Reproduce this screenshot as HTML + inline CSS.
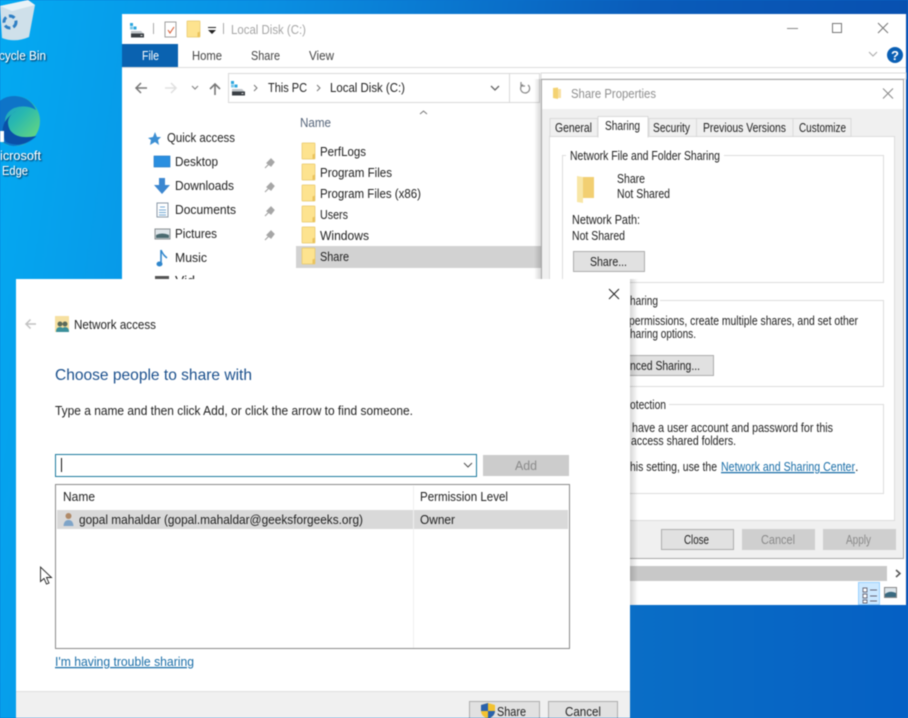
<!DOCTYPE html>
<html><head><meta charset="utf-8"><title>Network access</title>
<style>
html,body{margin:0;padding:0;width:908px;height:718px;overflow:hidden;background:#0a70d0}
svg{display:block;filter:blur(.4px)}
text{font-family:"Liberation Sans",sans-serif;font-size:12.5px;fill:#222;white-space:pre}
.g{fill:#8f8f8f}.w{fill:#fff;filter:url(#ts)}.lk{fill:#1a6ea8;text-decoration:underline}
</style></head><body>
<svg xmlns="http://www.w3.org/2000/svg" width="908" height="718" viewBox="0 0 908 718">
<defs>
<linearGradient id="bg" x1="0" y1="0" x2="1" y2="0.12"><stop offset="0" stop-color="#04aaf2"/><stop offset=".3" stop-color="#0a8fe2"/><stop offset=".7" stop-color="#0a5cba"/><stop offset="1" stop-color="#0850b0"/></linearGradient>
<linearGradient id="bg2" x1="0" y1="0" x2="1" y2="0"><stop offset="0" stop-color="#0a6ec6"/><stop offset="1" stop-color="#0560c4"/></linearGradient>
<linearGradient id="edge" x1="0" y1="0" x2="1" y2="1"><stop offset="0" stop-color="#1590d8"/><stop offset=".5" stop-color="#28b8b0"/><stop offset="1" stop-color="#78e070"/></linearGradient>
<linearGradient id="shd" x1="0" y1="0" x2="1" y2="0"><stop offset="0" stop-color="#000" stop-opacity=".16"/><stop offset="1" stop-color="#000" stop-opacity="0"/></linearGradient>
<filter id="ts" x="-10%" y="-30%" width="120%" height="160%"><feDropShadow dx="1" dy="1" stdDeviation=".8" flood-color="#002" flood-opacity=".85"/></filter>
<g id="f"><rect x="0" y="0" width="13" height="16" rx=".5" fill="#fde38f" stroke="#e8c868" stroke-width=".7"/><path d="M10.500 16V11.500L13 10.500V16Z" fill="#eac35c"/></g>
<g id="drive"><rect x="0" y="0" width="3" height="3" fill="#2aa6de"/><rect x="3.500" y="3.500" width="3" height="3" fill="#2aa6de"/><rect x="0" y="3.500" width="3" height="3" fill="#7cc8ea"/><path d="M1 8H11L14 11V14H1Z" fill="#bfc4c8"/><rect x="1" y="10.500" width="13" height="4" fill="#3a3f44"/><rect x="10.500" y="12" width="2" height="1" fill="#ddd"/></g>
<g id="pin"><path d="M3 7L7 3L10 6L7 10ZM4.500 8.500L1 12" fill="#a6a6a6" stroke="#a6a6a6" stroke-width="1.2"/></g>
</defs>

<!-- desktop -->
<rect width="908" height="718" fill="url(#bg)"/>
<rect x="630" y="605" width="278" height="113" fill="url(#bg2)"/>
<path d="M0 6L28 0L35 5L29 37Q15 43 2 38Z" fill="#cfe0ea"/>
<path d="M0 6L28 0L35 5L12 11Z" fill="#e9f2f7"/>
<circle cx="10" cy="22" r="6" fill="none" stroke="#2f7fc4" stroke-width="3" stroke-dasharray="6 3"/>
<text class="w" x="-1" y="60" textLength="47" lengthAdjust="spacingAndGlyphs">cycle Bin</text>
<circle cx="15" cy="121" r="25" fill="url(#edge)"/>
<path d="M-10 121Q-6 96 15 96Q30 97 36 110Q26 104 14 108Q2 114 6 128Q12 146 37 136Q26 146 13 146Q-4 144 -10 121Z" fill="#0e74c8"/>
<path d="M16 111Q4 118 10 130Q17 140 36 136Q22 149 6 142Q-4 124 16 111Z" fill="#0a50a8"/>
<rect x="0" y="131" width="4" height="11" fill="#fff"/>
<text class="w" x="0" y="160" textLength="41" lengthAdjust="spacingAndGlyphs">icrosoft</text>
<text class="w" x="2" y="175" textLength="26" lengthAdjust="spacingAndGlyphs">Edge</text>

<!-- explorer -->
<rect x="122" y="14" width="784" height="591" fill="#fff"/>
<use href="#drive" x="130" y="23"/>
<rect x="153" y="23" width="1" height="11" fill="#aaa"/>
<rect x="165" y="22" width="11" height="15" fill="#fff" stroke="#888" stroke-width=".8"/>
<path d="M168 30L170 33L174 27" fill="none" stroke="#d9613a" stroke-width="1.1"/>
<use href="#f" x="187" y="21"/>
<rect x="208" y="27" width="8" height="1" fill="#222"/><path d="M208 30H216L212 34Z" fill="#222"/>
<rect x="223" y="23" width="1" height="11" fill="#aaa"/>
<text x="231" y="34" textLength="75" lengthAdjust="spacingAndGlyphs" style="fill:#a6a6a6">Local Disk (C:)</text>
<rect x="787" y="28" width="11" height="1" fill="#888"/>
<rect x="832.500" y="23.500" width="9" height="9" fill="none" stroke="#777"/>
<path d="M878 23L888 33M888 23L878 33" stroke="#777" stroke-width="1"/>
<rect x="122" y="44" width="56" height="23" fill="#0a62b0"/>
<text x="142" y="60" textLength="17" lengthAdjust="spacingAndGlyphs" style="fill:#fff">File</text>
<text x="192" y="60" textLength="30" lengthAdjust="spacingAndGlyphs" style="fill:#444">Home</text>
<text x="251" y="60" textLength="29" lengthAdjust="spacingAndGlyphs" style="fill:#444">Share</text>
<text x="309" y="60" textLength="25" lengthAdjust="spacingAndGlyphs" style="fill:#444">View</text>
<path d="M869 52L873 56L877 52" fill="none" stroke="#aaa"/>
<circle cx="895" cy="55" r="8" fill="#0a5fb4"/>
<text x="891" y="60" textLength="8" lengthAdjust="spacingAndGlyphs" style="fill:#fff;font-weight:bold;font-size:13px">?</text>
<rect x="122" y="67" width="784" height="1" fill="#dcdcdc"/>
<path d="M147 88H136M141 83L136 88L141 93" fill="none" stroke="#777" stroke-width="1.5"/>
<path d="M176 88H165M171 83L176 88L171 93" fill="none" stroke="#e0e0e0" stroke-width="1.5"/>
<path d="M192 86L195 89L198 86" fill="none" stroke="#888" stroke-width="1.2"/>
<path d="M215 95V84M210 89L215 84L220 89" fill="none" stroke="#777" stroke-width="1.6"/>
<rect x="228.500" y="73.500" width="311" height="29" fill="#fff" stroke="#d9d9d9"/>
<rect x="509" y="74" width="1" height="28" fill="#d9d9d9"/>
<use href="#drive" x="231" y="81"/>
<path d="M254 85L257 88L254 91" fill="none" stroke="#777"/>
<text x="268" y="92" textLength="39" lengthAdjust="spacingAndGlyphs">This PC</text>
<path d="M317 85L320 88L317 91" fill="none" stroke="#777"/>
<text x="330" y="92" textLength="75" lengthAdjust="spacingAndGlyphs">Local Disk (C:)</text>
<path d="M491 86L495 90L499 86" fill="none" stroke="#666" stroke-width="1.3"/>
<path d="M528 85A4.500 4.500 0 1 1 523 84.500M521 82V86H525" fill="none" stroke="#888" stroke-width="1.2"/>
<rect x="541" y="73" width="365" height="6" fill="#fff" stroke="#d9d9d9"/>

<path d="M155 132L157 137L161 137L158 140L159 145L155 142L150 145L151 140L148 138L153 137Z" fill="#3b8fd4"/>
<text x="167" y="142" textLength="68" lengthAdjust="spacingAndGlyphs">Quick access</text>
<rect x="154" y="156" width="16" height="11" fill="#2a8fe0" stroke="#1a70c0" stroke-width=".6"/>
<text x="175" y="166" textLength="43" lengthAdjust="spacingAndGlyphs">Desktop</text>
<path d="M159 178H165V185H170L162 194L154 185H159Z" fill="#3c87d0"/>
<text x="175" y="190" textLength="59" lengthAdjust="spacingAndGlyphs">Downloads</text>
<rect x="157" y="203" width="11" height="14" fill="#fff" stroke="#8a9aa8"/>
<path d="M160 207H165M159 210H166M159 212.500H166M159 215H166" stroke="#4a90c8" stroke-width=".8"/>
<text x="175" y="214" textLength="61" lengthAdjust="spacingAndGlyphs">Documents</text>
<rect x="155" y="229" width="15" height="10" fill="#dfe6ea" stroke="#8a8f92"/>
<path d="M156 235Q162 232 169 235V238H156Z" fill="#4a6a70"/>
<text x="175" y="238" textLength="42" lengthAdjust="spacingAndGlyphs">Pictures</text>
<path d="M161 250V264" stroke="#2f86cc" stroke-width="1.6"/><ellipse cx="159.500" cy="264" rx="3" ry="2.500" fill="#2f86cc"/><path d="M161 250Q163 255 167 258" fill="none" stroke="#2f86cc" stroke-width="1.5"/>
<text x="175" y="262" textLength="32" lengthAdjust="spacingAndGlyphs">Music</text>
<use href="#pin" x="264" y="156"/><use href="#pin" x="264" y="180"/><use href="#pin" x="264" y="204"/><use href="#pin" x="264" y="228"/>
<rect x="155" y="276" width="14" height="4" fill="#555"/>
<text x="175" y="285" textLength="20" lengthAdjust="spacingAndGlyphs">Vid</text>

<path d="M420 114L423.500 111L427 114" fill="none" stroke="#777"/>
<text x="300" y="127" textLength="31" lengthAdjust="spacingAndGlyphs" style="fill:#56657a">Name</text>
<rect x="296" y="246" width="246" height="22" fill="#d2d2d2"/>
<use href="#f" x="302" y="143"/><text x="320" y="156" textLength="46" lengthAdjust="spacingAndGlyphs">PerfLogs</text>
<use href="#f" x="302" y="164"/><text x="320" y="177" textLength="72" lengthAdjust="spacingAndGlyphs">Program Files</text>
<use href="#f" x="302" y="185"/><text x="320" y="198" textLength="101" lengthAdjust="spacingAndGlyphs">Program Files (x86)</text>
<use href="#f" x="302" y="206"/><text x="320" y="219" textLength="28" lengthAdjust="spacingAndGlyphs">Users</text>
<use href="#f" x="302" y="227"/><text x="320" y="240" textLength="49" lengthAdjust="spacingAndGlyphs">Windows</text>
<use href="#f" x="302" y="248"/><text x="320" y="261" textLength="29" lengthAdjust="spacingAndGlyphs">Share</text>

<rect x="534" y="79" width="7" height="526" fill="url(#shd)" transform="matrix(-1 0 0 1 1075 0)"/>
<rect x="630" y="566" width="257" height="15" fill="#c8c8c8"/>
<path d="M896 570L900 573.500L896 577" fill="none" stroke="#555" stroke-width="1.5"/>
<rect x="858.500" y="582.500" width="21" height="22" fill="#cce8ff" stroke="#99d1ff"/>
<path d="M863 588H867V592H863ZM863 594H867V598H863ZM863 600H867V603H863ZM870 590H877M870 596H877M870 601H877" fill="#fff" stroke="#667" stroke-width=".9"/>
<rect x="884.500" y="587.500" width="12" height="10" fill="#dde5ea" stroke="#888"/>
<path d="M885 594Q890 590 896 593V597H885Z" fill="#3a6a80"/>
<rect x="122" y="566" width="508" height="15" fill="#c8c8c8"/>

<!-- properties -->
<rect x="541.500" y="79.500" width="362" height="479" fill="#f0f0f0" stroke="#a8a8a8"/>
<rect x="542" y="80" width="361" height="29" fill="#fff"/>
<path d="M553 88L558 87.500V99L553 98Z" fill="#f4d272"/><path d="M558 89H561V98H558Z" fill="#f8e0a0"/>
<text x="571" y="98" textLength="85" lengthAdjust="spacingAndGlyphs" style="fill:#8f8f8f">Share Properties</text>
<path d="M883 88.500L893 98.500M893 88.500L883 98.500" stroke="#8a8a8a"/>
<rect x="549.500" y="136.500" width="345" height="384" fill="#fff" stroke="#dcdcdc"/>
<rect x="550" y="118.500" width="47.500" height="18" fill="#f0f0f0" stroke="#d9d9d9"/>
<rect x="649" y="118.500" width="47.500" height="18" fill="#f0f0f0" stroke="#d9d9d9"/>
<rect x="696.500" y="118.500" width="96.500" height="18" fill="#f0f0f0" stroke="#d9d9d9"/>
<rect x="793" y="118.500" width="58" height="18" fill="#f0f0f0" stroke="#d9d9d9"/>
<path d="M598 137.500V116.500H648V137.500" fill="#fff" stroke="#d9d9d9"/>
<rect x="598.500" y="135" width="49" height="3" fill="#fff"/>
<text x="555" y="132" textLength="37" lengthAdjust="spacingAndGlyphs">General</text>
<text x="605" y="130" textLength="35" lengthAdjust="spacingAndGlyphs">Sharing</text>
<text x="653" y="132" textLength="37" lengthAdjust="spacingAndGlyphs">Security</text>
<text x="703" y="132" textLength="83" lengthAdjust="spacingAndGlyphs">Previous Versions</text>
<text x="799" y="132" textLength="47" lengthAdjust="spacingAndGlyphs">Customize</text>

<rect x="562.500" y="155.500" width="321" height="127" fill="#fff" stroke="#dcdcdc"/>
<rect x="566" y="150" width="158" height="12" fill="#fff"/>
<text x="570" y="160" textLength="150" lengthAdjust="spacingAndGlyphs">Network File and Folder Sharing</text>
<path d="M577 176L583 177V203L577 202Z" fill="#f8e6a6"/><path d="M583 177H594V198H583Z" fill="#f2cf72"/>
<text x="617" y="183" textLength="28" lengthAdjust="spacingAndGlyphs">Share</text>
<text x="617" y="198" textLength="53" lengthAdjust="spacingAndGlyphs">Not Shared</text>
<text x="572" y="224" textLength="68" lengthAdjust="spacingAndGlyphs">Network Path:</text>
<text x="572" y="240" textLength="53" lengthAdjust="spacingAndGlyphs">Not Shared</text>
<rect x="573.500" y="251.500" width="71" height="20" fill="#e1e1e1" stroke="#adadad"/>
<text x="590" y="266" textLength="37" lengthAdjust="spacingAndGlyphs">Share...</text>

<rect x="600.500" y="300.500" width="283" height="86" fill="#fff" stroke="#dcdcdc"/>
<rect x="628" y="295" width="32" height="12" fill="#fff"/>
<text x="630" y="305" textLength="28" lengthAdjust="spacingAndGlyphs">haring</text>
<text x="629" y="325" textLength="229" lengthAdjust="spacingAndGlyphs">permissions, create multiple shares, and set other</text>
<text x="630" y="338" textLength="66" lengthAdjust="spacingAndGlyphs">haring options.</text>
<rect x="600.500" y="355.500" width="113" height="20" fill="#e1e1e1" stroke="#adadad"/>
<text x="630" y="370" textLength="70" lengthAdjust="spacingAndGlyphs">nced Sharing...</text>

<rect x="600.500" y="404.500" width="283" height="89" fill="#fff" stroke="#dcdcdc"/>
<rect x="628" y="399" width="41" height="12" fill="#fff"/>
<text x="630" y="409" textLength="36" lengthAdjust="spacingAndGlyphs">otection</text>
<text x="632" y="432" textLength="201" lengthAdjust="spacingAndGlyphs">have a user account and password for this</text>
<text x="631" y="445" textLength="105" lengthAdjust="spacingAndGlyphs">access shared folders.</text>
<text x="630" y="471" textLength="87" lengthAdjust="spacingAndGlyphs">his setting, use the</text>
<text class="lk" x="721" y="471" textLength="134" lengthAdjust="spacingAndGlyphs" style="fill:#1a6ea8">Network and Sharing Center</text>
<text x="855" y="471">.</text>

<rect x="661.500" y="529.500" width="72" height="20" fill="#e1e1e1" stroke="#adadad"/>
<text x="684" y="544" textLength="25" lengthAdjust="spacingAndGlyphs">Close</text>
<rect x="742" y="529" width="73" height="21" fill="#cfcfcf"/>
<text x="761" y="544" textLength="34" lengthAdjust="spacingAndGlyphs" style="fill:#8a8a8a">Cancel</text>
<rect x="823" y="529" width="73" height="21" fill="#cfcfcf"/>
<text x="846" y="544" textLength="25" lengthAdjust="spacingAndGlyphs" style="fill:#8a8a8a">Apply</text>

<!-- dialog -->
<rect x="630" y="279" width="8" height="326" fill="url(#shd)"/>
<rect x="16" y="279" width="614" height="439" fill="#fff"/>
<path d="M609 289L619 299M619 289L609 299" stroke="#222"/>
<path d="M36 324H26M30.500 319.500L26 324L30.500 328.500" fill="none" stroke="#c2c2c2" stroke-width="1.5"/>
<rect x="55" y="316" width="14" height="16" fill="#f6e0a0"/>
<circle cx="60" cy="324" r="2.500" fill="#5a6a5a"/><circle cx="65" cy="324" r="2.500" fill="#5a6a5a"/><path d="M56 332Q56 327 60 327Q64 327 64 332ZM61 332Q62 327 65 327Q69 327 69 332Z" fill="#3a8f9a"/>
<text x="74" y="329" textLength="82" lengthAdjust="spacingAndGlyphs">Network access</text>
<text x="55" y="380" textLength="197" lengthAdjust="spacingAndGlyphs" style="fill:#1a4f8c;font-size:16px">Choose people to share with</text>
<text x="55" y="415" textLength="358" lengthAdjust="spacingAndGlyphs">Type a name and then click Add, or click the arrow to find someone.</text>
<rect x="55.500" y="454.500" width="421" height="22" fill="#fff" stroke="#1d7a9e"/>
<rect x="61" y="458" width="1" height="14" fill="#111"/>
<path d="M464 463L468 467L472 463" fill="none" stroke="#555" stroke-width="1.1"/>
<rect x="483" y="455" width="86" height="21" fill="#cccccc"/>
<text x="515" y="470" textLength="22" lengthAdjust="spacingAndGlyphs" style="fill:#8a8a8a">Add</text>
<rect x="55.500" y="484.500" width="514" height="164" fill="#fff" stroke="#8a8a8a"/>
<rect x="57" y="510" width="511" height="19" fill="#d9d9d9"/>
<rect x="413" y="486" width="1" height="162" fill="#efefef"/>
<text x="63" y="501" textLength="32" lengthAdjust="spacingAndGlyphs">Name</text>
<text x="420" y="501" textLength="88" lengthAdjust="spacingAndGlyphs">Permission Level</text>
<circle cx="68.500" cy="516" r="3" fill="#b08a68"/><path d="M63.500 526Q64 520 68.500 520Q73 520 73.500 526Z" fill="#7ea4c8"/>
<text x="79" y="524" textLength="284" lengthAdjust="spacingAndGlyphs">gopal mahaldar (gopal.mahaldar@geeksforgeeks.org)</text>
<text x="420" y="524" textLength="35" lengthAdjust="spacingAndGlyphs">Owner</text>
<text class="lk" x="55" y="666" textLength="139" lengthAdjust="spacingAndGlyphs" style="fill:#1a6ea8">I'm having trouble sharing</text>
<path d="M40.500 567V581.500L44 578.500L46.500 584L49 583L46.500 577.500L51.500 577.500Z" fill="#fff" stroke="#222" stroke-width=".9"/>
<rect x="16" y="691" width="614" height="27" fill="#f0f0f0"/>
<rect x="16" y="691" width="614" height="1" fill="#dfdfdf"/>
<rect x="469.500" y="701.500" width="70" height="20" fill="#e1e1e1" stroke="#adadad"/>
<path d="M488 703L495 705V711Q495 716 488 719Q481 716 481 711V705Z" fill="#f2c230"/>
<path d="M488 703V711H481V705ZM488 711H495Q495 716 488 719Z" fill="#2a62ac"/>
<text x="497" y="716" textLength="29" lengthAdjust="spacingAndGlyphs">Share</text>
<rect x="548.500" y="701.500" width="69" height="20" fill="#e1e1e1" stroke="#adadad"/>
<text x="565" y="716" textLength="36" lengthAdjust="spacingAndGlyphs">Cancel</text>
</svg>
</body></html>
